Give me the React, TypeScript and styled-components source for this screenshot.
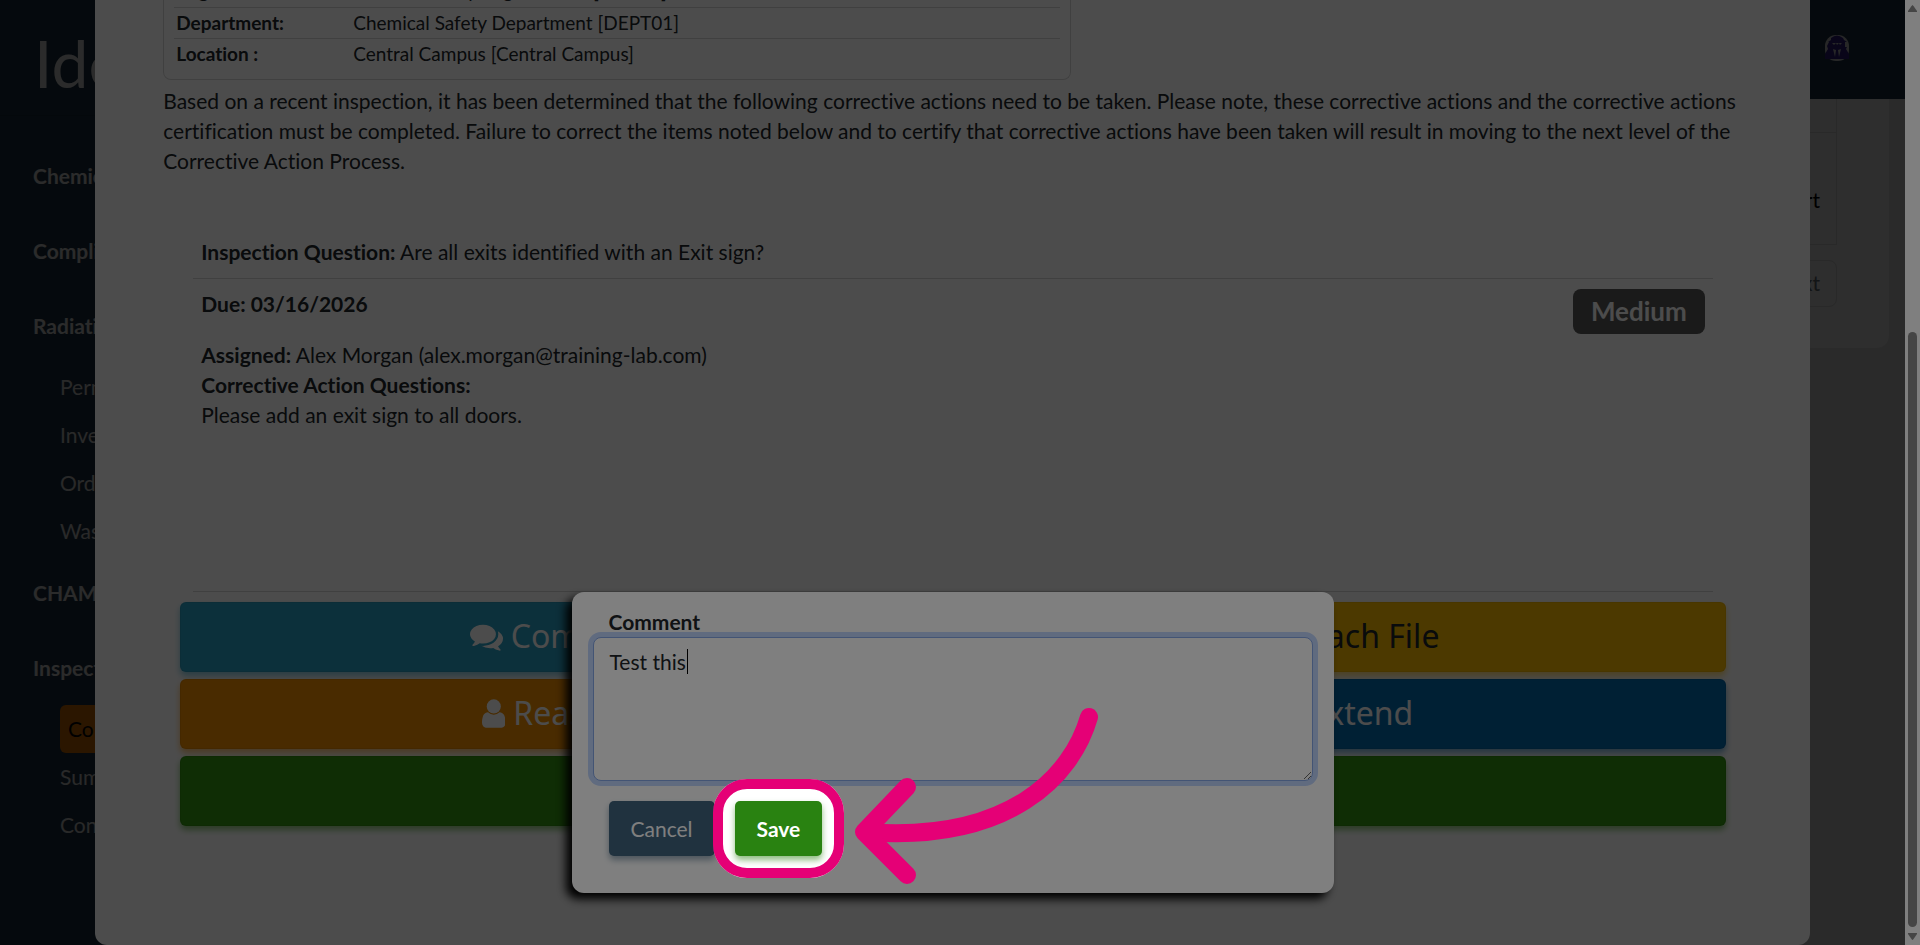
import React from "react";
import styled, { createGlobalStyle } from "styled-components";
import { FaPaperclip, FaCalendarAlt } from "react-icons/fa";

const GlobalStyle = createGlobalStyle`
  *, *::before, *::after { box-sizing: border-box; }
  html, body, #root { height: 100%; }
  body {
    margin: 0;
    overflow: hidden;
    font-family: Lato, "Liberation Sans", sans-serif;
    font-size: 21px;
    line-height: 30px;
    font-variant-ligatures: no-common-ligatures;
    color: #212529;
    background: #e9e9e9;
  }
  button, textarea { font: inherit; font-variant-ligatures: inherit; }
`;

const Screen = styled.div`
  position: relative;
  height: 100vh;
  overflow: hidden;
  display: flex;
  background: #e9e9e9;
`;

const Page = styled.div`
  flex: 1;
  min-width: 0;
  position: relative;
  display: flex;
  overflow: hidden;
`;

const Sidebar = styled.nav`
  flex: none;
  width: 320px;
  background: #21384a;
  color: #f0f0f0;
`;

const Logo = styled.div`
  height: 116px;
  margin-bottom: 22px;
  padding: 18px 0 0 34px;
  font-size: 66px;
  line-height: 90px;
  font-weight: 400;
  white-space: nowrap;
  border-bottom: 1px solid #1c3040;
`;

const NavSection = styled.section`
  padding-left: 33px;
`;

const NavHeading = styled.h2`
  margin: 0;
  padding: 23px 0 22px;
  font-size: 21px;
  line-height: 30px;
  font-weight: 700;
`;

const NavList = styled.ul`
  list-style: none;
  margin: 0;
  padding: 0 16px 0 27px;
`;

const NavLink = styled.a<{ $active?: boolean }>`
  display: block;
  padding: 9px ${(p) => (p.$active ? 8 : 0)}px;
  line-height: 30px;
  text-decoration: none;
  border-radius: 6px;
  color: ${(p) => (p.$active ? "#000" : "#e6e6e6")};
  background: ${(p) => (p.$active ? "#f07e00" : "transparent")};
`;

const Main = styled.div`
  flex: 1;
  min-width: 0;
`;

const TopBar = styled.header`
  height: 99px;
  padding: 0 56px 4px 0;
  display: flex;
  align-items: center;
  justify-content: flex-end;
  background: #21384a;
`;

const ReportCard = styled.section`
  margin: 0 16px;
  padding: 0 52px 41px 24px;
  border-radius: 0 0 12px 12px;
  background: #fff;
  color: #000;
`;

const ReportTable = styled.table`
  width: 100%;
  border-collapse: collapse;
  text-align: right;

  td {
    border: 1px solid #e4e4e4;
    border-top: 0;
    padding: 0 16px;
  }
  tr:first-child td { height: 33px; }
  tr:last-child td { height: 112px; padding-top: 24px; }
`;

const Pager = styled.div`
  display: flex;
  justify-content: flex-end;
  padding-top: 15px;
`;

const PagerButton = styled.button`
  height: 47px;
  padding: 0 16px;
  border: 1px solid #e4e4e4;
  border-radius: 8px;
  background: transparent;
  color: #6c757d;
`;

const Shade = styled.div`
  position: absolute;
  inset: 0;
  background: rgba(0, 0, 0, 0.4);
`;

const Sheet = styled.main`
  position: absolute;
  inset: 0 5% 0 5%;
  padding: 0 60px 0 68px;
  overflow: hidden;
  background: #fff;
  border-radius: 0 0 12px 12px;
`;

const Facts = styled.div`
  height: 80px;
  max-width: 908px;
  padding: 0 10px;
  padding-bottom: 10px;
  display: flex;
  flex-direction: column;
  justify-content: flex-end;
  overflow: hidden;
  border: 1px solid #d8d8d8;
  border-top: 0;
  border-radius: 0 0 8px 8px;
`;

const FactTable = styled.table`
  width: 100%;
  border-collapse: collapse;
  font-size: 19px;
  line-height: 30px;

  th, td {
    height: 31px;
    padding: 0 2px;
    text-align: left;
  }
  th { width: 177px; font-weight: 700; }
  tr + tr { border-top: 1px solid #d8d8d8; }
`;

const Notice = styled.p`
  margin: 6px 0 0;
`;

const Action = styled.section`
  margin: 61px 37px 0 30px;
  padding-bottom: 161px;
  border-bottom: 1px solid #d8d8d8;
`;

const Question = styled.div`
  padding: 0 8px 11px;
  border-bottom: 1px solid #d8d8d8;
`;

const DueRow = styled.div`
  display: flex;
  justify-content: space-between;
  align-items: flex-start;
  height: 61px;
  padding: 10px 8px 0;
`;

const Badge = styled.span`
  padding: 7px 18px 8px;
  border-radius: 8px;
  background: #575757;
  color: #fff;
  font-size: 26px;
  font-weight: 700;
  line-height: 30px;
`;

const Details = styled.div`
  padding: 0 8px;
`;

const ActionGrid = styled.div`
  display: grid;
  grid-template-columns: 1fr 1fr;
  gap: 7px 8px;
  padding: 10px 24px 0 17px;
`;

const BigButton = styled.button<{ $bg: string; $fg?: string; $wide?: boolean }>`
  grid-column: ${(p) => (p.$wide ? "1 / -1" : "auto")};
  height: 70px;
  padding: 0 6px 2px;
  display: flex;
  align-items: center;
  justify-content: center;
  gap: 8px;
  border: 1px solid rgba(0, 0, 0, 0.06);
  border-radius: 6px;
  background: ${(p) => p.$bg};
  color: ${(p) => p.$fg ?? "#fff"};
  font-family: "Noto Sans", sans-serif;
  font-size: 32px;
  line-height: 40px;
  box-shadow: 0 4px 6px ${(p) => p.$bg}88;
`;

const Glyph = styled.svg`
  height: 33px;
  width: auto;
  fill: currentColor;
`;

/* The last 15px of the screen belong to the scrollbar. */
const Dialog = styled.form`
  position: absolute;
  left: calc((100% - 15px) * 0.3);
  width: calc((100% - 15px) * 0.4);
  bottom: 52px;
  padding: 15px 21px 37px;
  border-radius: 12px;
  background: #fff;
  box-shadow: -6px 6px 10px #000;
`;

const FieldLabel = styled.label`
  display: block;
  padding: 0 16px;
  font-weight: 700;
`;

const Field = styled.div`
  position: relative;
`;

const CommentBox = styled.textarea`
  display: block;
  width: 100%;
  height: 144px;
  padding: 9px 16px;
  border: 1px solid #86a8e8;
  border-radius: 8px;
  outline: none;
  background: #fff;
  color: #212529;
  box-shadow: 0 0 0 5px #c1d6ff;
  resize: vertical;
`;

const Caret = styled.span`
  position: absolute;
  left: 94px;
  top: 12px;
  width: 1px;
  height: 25px;
  background: #000;
`;

const DialogActions = styled.div`
  display: flex;
  gap: 20px;
  padding: 20px 16px 0;
`;

const DialogButton = styled.button<{ $bg: string; $strong?: boolean }>`
  height: 55px;
  padding: 0 22px;
  border: 0;
  border-radius: 5px;
  background: ${(p) => p.$bg};
  color: #fff;
  font-weight: ${(p) => (p.$strong ? 700 : 400)};
  box-shadow: 0 4px 6px ${(p) => p.$bg}88;
`;

const SaveSlot = styled.div`
  position: relative;
`;

const Spotlight = styled.div`
  position: absolute;
  inset: -22px;
  border: 10px solid #e50076;
  border-radius: 34px;
  box-shadow: 0 0 0 3000px rgba(0, 0, 0, 0.5);
  pointer-events: none;
`;

const Arrow = styled.svg`
  position: absolute;
  left: 118px;
  top: -95px;
  width: 254px;
  height: 180px;
  overflow: visible;
`;

const Scrollbar = styled.div`
  flex: none;
  width: 15px;
  padding: 5px 3px;
  display: flex;
  flex-direction: column;
  align-items: center;
  background: #fff;
`;

const Thumb = styled.div`
  width: 9px;
  height: 595px;
  margin: auto 0 6px;
  border-radius: 5px;
  background: #8b8b8b;
`;

const sections = [
  { title: "Chemicals", links: [] },
  { title: "Compliance", links: [] },
  { title: "Radiation", links: ["Permits", "Inventory", "Orders", "Waste"] },
  { title: "CHAMPS", links: [] },
  { title: "Inspections", links: ["Corrective", "Summary", "Contacts"] },
];

const Avatar = () => (
  <svg width="24" height="26" viewBox="0 0 24 26" role="img" aria-label="Profile">
    <rect width="24" height="26" rx="11" fill="#ddd" />
    <path d="M6 3 Q12-2 18 3 L19 5 L22 7 L3 7 L6 5Z M4 7 H20 V12 H22 L21 14 L24 19 V24 H0 V19 L3 14 L2 11Z" fill="#33208c" />
    <path d="M7 8 L9 10 L11 8Z M11 8 L12 10 L14 8Z M14 8 L15 10 L17 8Z M8 14 L11 15 L10 22Z M16 14 L13 15 L14 22Z" fill="#ddd" />
  </svg>
);

const CommentsGlyph = () => (
  <Glyph viewBox="0 0 1792 1792" aria-hidden="true">
    <path d="M1408 768q0 139-94 257t-256.500 186.500-353.500 68.500q-86 0-176-16-124 88-278 128-36 9-86 16h-3q-11 0-20.500-8t-11.500-21q-1-3-1-6.500t.5-6.500 2-6l2.500-5 3.500-5.500 4-5 4.500-5 4-4.500q5-6 23-25t26-29.500 22.500-29 25-38.500 20.500-44q-124-72-195-177t-71-224q0-139 94-257t256.500-186.500 353.500-68.500 353.500 68.500 256.500 186.500 94 257zm384 256q0 120-71 224.500t-195 176.500q10 24 20.500 44t25 38.500 22.500 29 26 29.500 23 25q1 1 4 4.500t4.500 5 4 5 3.500 5.500l2.500 5 2 6 .5 6.500-1 6.500q-3 14-13 22t-22 7q-50-7-86-16-154-40-278-128-90 16-176 16-271 0-472-132 58 4 88 4 161 0 309-45t264-129q125-92 192-212t67-254q0-77-23-152 129 71 204 178t75 230z" />
  </Glyph>
);

const UserGlyph = () => (
  <Glyph viewBox="0 0 1280 1792" aria-hidden="true">
    <path d="M1280 1399q0 109-62.500 187t-150.500 78H213q-88 0-150.500-78T0 1399q0-85 8.500-160.500t31.500-152 58.500-131 94-89T327 832q131 128 313 128t313-128q76 0 134.500 34.500t94 89 58.500 131 31.500 152 8.500 160.500z" />
    <circle cx="640" cy="512" r="384" />
  </Glyph>
);

export default function App() {
  return (
    <>
      <GlobalStyle />
      <Screen>
        <Page>
          <Sidebar>
            <Logo>Ideal</Logo>
            {sections.map((s) => (
              <NavSection key={s.title}>
                <NavHeading>{s.title}</NavHeading>
                {s.links.length > 0 && (
                  <NavList>
                    {s.links.map((l) => (
                      <li key={l}>
                        <NavLink href="#" $active={l === "Corrective"}>{l}</NavLink>
                      </li>
                    ))}
                  </NavList>
                )}
              </NavSection>
            ))}
          </Sidebar>
          <Main>
            <TopBar><Avatar /></TopBar>
            <ReportCard>
              <ReportTable>
                <tbody>
                  <tr><td /></tr>
                  <tr><td>Report</td></tr>
                </tbody>
              </ReportTable>
              <Pager><PagerButton type="button">Next</PagerButton></Pager>
            </ReportCard>
          </Main>
          <Shade />
          <Sheet>
            <Facts>
              <FactTable>
                <tbody>
                  <tr><th>Organization:</th><td>Test University Organization [ORG01]</td></tr>
                  <tr><th>Department:</th><td>Chemical Safety Department [DEPT01]</td></tr>
                  <tr><th>Location :</th><td>Central Campus [Central Campus]</td></tr>
                </tbody>
              </FactTable>
            </Facts>
            <Notice>
              Based on a recent inspection, it has been determined that the following corrective actions need to be
              taken. Please note, these corrective actions and the corrective actions certification must be completed.
              Failure to correct the items noted below and to certify that corrective actions have been taken will
              result in moving to the next level of the Corrective Action Process.
            </Notice>
            <Action>
              <Question><strong>Inspection Question:</strong> Are all exits identified with an Exit sign?</Question>
              <DueRow>
                <strong>Due: 03/16/2026</strong>
                <Badge>Medium</Badge>
              </DueRow>
              <Details>
                <div><strong>Assigned:</strong> Alex Morgan (alex.morgan@training-lab.com)</div>
                <div><strong>Corrective Action Questions:</strong></div>
                <div>Please add an exit sign to all doors.</div>
              </Details>
            </Action>
            <ActionGrid>
              <BigButton type="button" $bg="#2ba0c5"><CommentsGlyph />Comment</BigButton>
              <BigButton type="button" $bg="#ffc000" $fg="#212529"><FaPaperclip />Attach File</BigButton>
              <BigButton type="button" $bg="#f39000"><UserGlyph />Reassign</BigButton>
              <BigButton type="button" $bg="#006bb0"><FaCalendarAlt />Extend</BigButton>
              <BigButton type="button" $bg="#329611" $wide>Complete</BigButton>
            </ActionGrid>
          </Sheet>
          <Shade />
        </Page>
        <Scrollbar>
          <svg width="9" height="7" viewBox="0 0 9 7"><path d="M4.500 0 Q5 0 9 6 V7 H0 V6 Q4 0 4.500 0Z" fill="#8b8b8b" /></svg>
          <Thumb />
          <svg width="9" height="7" viewBox="0 0 9 7"><path d="M4.500 7 Q5 7 9 1 V0 H0 V1 Q4 7 4.500 7Z" fill="#8b8b8b" /></svg>
        </Scrollbar>
        <Dialog onSubmit={(e) => e.preventDefault()}>
          <FieldLabel htmlFor="comment">Comment</FieldLabel>
          <Field>
            <CommentBox id="comment" defaultValue="Test this" spellCheck={false} />
            <Caret />
          </Field>
          <DialogActions>
            <DialogButton type="button" $bg="#40647e">Cancel</DialogButton>
            <SaveSlot>
              <DialogButton type="submit" $bg="#298211" $strong>Save</DialogButton>
              <Spotlight />
              <Arrow viewBox="0 0 254 180" fill="none" stroke="#e50076" strokeWidth="18" strokeLinecap="round" strokeLinejoin="round" aria-hidden="true">
                <path d="M236 11 C219 70 157 137 12 126" />
                <path d="M54 81 L11 126 L54 169" />
              </Arrow>
            </SaveSlot>
          </DialogActions>
        </Dialog>
      </Screen>
    </>
  );
}
